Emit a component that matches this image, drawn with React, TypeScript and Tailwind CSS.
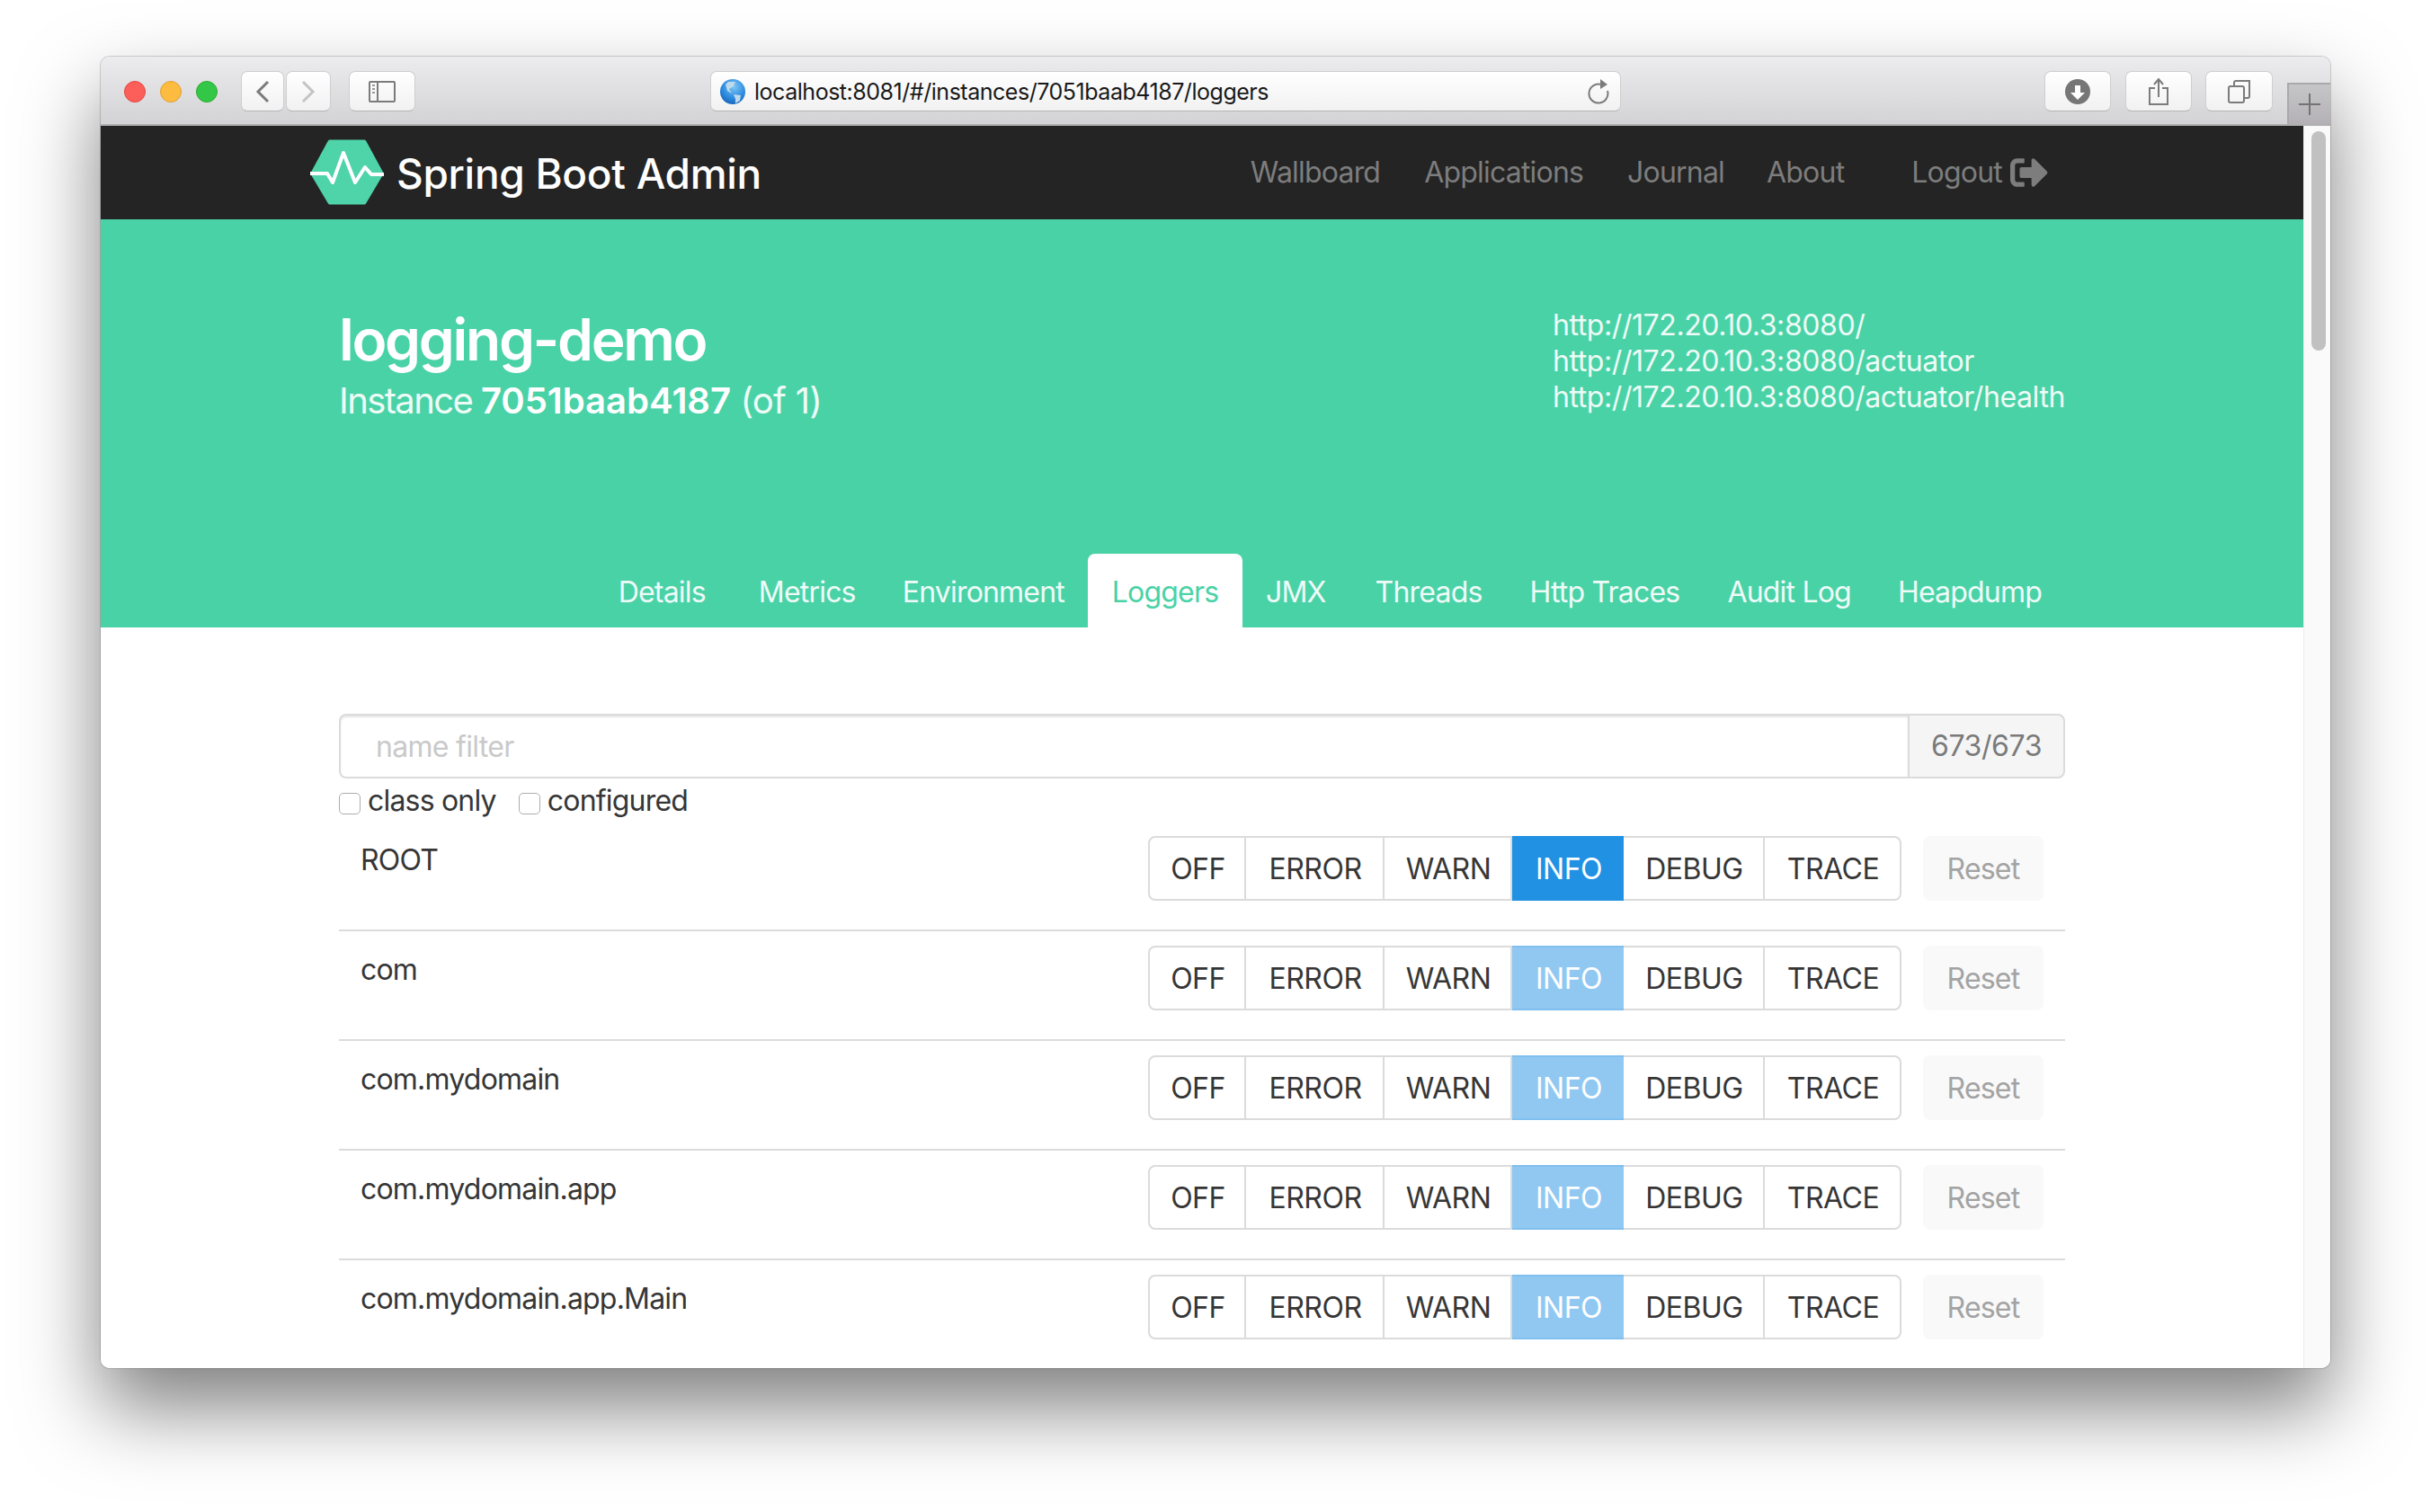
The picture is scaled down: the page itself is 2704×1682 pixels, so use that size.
import React from "react";
import { FaSignOutAlt } from "react-icons/fa";

const btnClass =
  "h-[45px] rounded-[7px] border border-[#cfcecf] border-b-[#b5b4b5] bg-gradient-to-b from-[#ffffff] to-[#f1f1f1] flex items-center justify-center shrink-0";

function Logo() {
  return (
    <svg width="82" height="74" viewBox="0 0 82 74" className="shrink-0">
      <path
        d="M22 3 H60 L79 38 L60 70 H22 L3 38 Z"
        fill="#4fd3a9"
        stroke="#4fd3a9"
        strokeWidth="5"
        strokeLinejoin="round"
      />
      <path
        d="M0 38 H19 L25 48 L37 15 L50 48 L61 31 L68 39 H82"
        fill="none"
        stroke="#ffffff"
        strokeWidth="4"
        strokeLinejoin="round"
      />
    </svg>
  );
}

function Globe() {
  return (
    <svg width="28" height="28" viewBox="0 0 28 28" className="shrink-0">
      <defs>
        <radialGradient id="g" cx="0.55" cy="0.3" r="0.8">
          <stop offset="0" stopColor="#7fc6f5" />
          <stop offset="0.55" stopColor="#2f8ee0" />
          <stop offset="1" stopColor="#1259b0" />
        </radialGradient>
      </defs>
      <circle cx="14" cy="14" r="14" fill="url(#g)" />
      <path d="M9 3 L17 3 L15 8 L10 11 L13 16 L8 13 L6 6 Z" fill="#bcd9ee" />
      <path d="M15 17 L23 18 L22 24 L17 27 L17 22 Z" fill="#bcd9ee" />
    </svg>
  );
}

function Toolbar() {
  return (
    <div className="h-[77px] shrink-0 flex items-start pt-4 border-b-2 border-[#b1b0b1] bg-gradient-to-b from-[#ecebed] to-[#d3d2d5]">
      <div className="ml-[26px] mt-[11px] flex gap-4">
        <div className="w-6 h-6 rounded-full bg-[#fc5f5a] border border-[#e2463f]" />
        <div className="w-6 h-6 rounded-full bg-[#fdbc40] border border-[#de9f34]" />
        <div className="w-6 h-6 rounded-full bg-[#33c748] border border-[#2aac2d]" />
      </div>
      <div className={btnClass + " ml-[26px] w-[48px]"}>
        <svg width="18" height="26" viewBox="0 0 18 26">
          <path d="M15 2 L4 13 L15 24" fill="none" stroke="#7b7b7b" strokeWidth="3" />
        </svg>
      </div>
      <div className={btnClass + " ml-[2px] w-[50px]"}>
        <svg width="18" height="26" viewBox="0 0 18 26">
          <path d="M3 2 L14 13 L3 24" fill="none" stroke="#c4c4c4" strokeWidth="3" />
        </svg>
      </div>
      <div className={btnClass + " ml-5 w-[74px]"}>
        <svg width="30" height="24" viewBox="0 0 30 24">
          <rect x="1" y="1" width="28" height="22" rx="1" fill="none" stroke="#7b7b7b" strokeWidth="2" />
          <path d="M10 1 V23" stroke="#7b7b7b" strokeWidth="2" />
          <path d="M4 5 H7 M4 9 H7 M4 13 H7" stroke="#9a9a9a" strokeWidth="2" />
        </svg>
      </div>
      <div className={btnClass + " ml-[328px] w-[1013px] justify-start px-[10px]"}>
        <Globe />
        <span className="ml-[10px] pt-[2px] text-[25px] leading-none text-[#1a1a1a] font-['Inter',sans-serif] tracking-[-0.47px] whitespace-nowrap">
          localhost:8081/#/instances/7051baab4187/loggers
        </span>
        <svg width="26" height="28" viewBox="0 0 26 28" className="ml-auto">
          <path d="M15 6 A 10.5 10.5 0 1 0 22 13" fill="none" stroke="#7b7b7b" strokeWidth="2" />
          <path d="M14 0 L22 6 L14 11 Z" fill="#7b7b7b" />
        </svg>
      </div>
      <div className={btnClass + " ml-[471px] w-[74px]"}>
        <svg width="28" height="28" viewBox="0 0 28 28">
          <circle cx="14" cy="14" r="14" fill="#767676" />
          <path d="M11 7 H17 V15 H22 L14 23 L6 15 H11 Z" fill="#ffffff" />
        </svg>
      </div>
      <div className={btnClass + " ml-4 w-[74px]"}>
        <svg width="22" height="30" viewBox="0 0 22 30">
          <path d="M7 11 H1 V29 H21 V11 H15" fill="none" stroke="#7b7b7b" strokeWidth="2" />
          <path d="M11 21 V2 M6 7 L11 1 L16 7" fill="none" stroke="#7b7b7b" strokeWidth="2" />
        </svg>
      </div>
      <div className={btnClass + " ml-[15px] w-[75px]"}>
        <svg width="26" height="26" viewBox="0 0 26 26">
          <rect x="1" y="7" width="17" height="18" rx="2" fill="none" stroke="#7b7b7b" strokeWidth="2" />
          <path d="M7 7 V3 Q7 1 9 1 H24 V18 Q24 20 22 20 H18" fill="none" stroke="#7b7b7b" strokeWidth="2" />
        </svg>
      </div>
      <div className="ml-4 mt-[13px] w-[48px] h-[46px] flex items-center justify-center border-t-2 border-l-2 border-[#a9a8aa] bg-gradient-to-b from-[#c6c5c8] to-[#b3b1b5]">
        <svg width="24" height="24" viewBox="0 0 24 24">
          <path d="M12 0 V24 M0 12 H24" stroke="#737373" strokeWidth="2" />
        </svg>
      </div>
    </div>
  );
}

function Navbar() {
  return (
    <div className="h-[104px] shrink-0 bg-[#242424] flex items-center pl-[233px] pr-[284px]">
      <Logo />
      <span className="ml-[14px] pt-[2px] text-[46px] font-medium text-white tracking-[-0.3px] whitespace-nowrap">Spring Boot Admin</span>
      <div className="ml-auto flex items-center text-[32px] text-[#7d7d7d] tracking-[-0.8px] whitespace-nowrap">
        <span>Wallboard</span>
        <span className="ml-[49px]">Applications</span>
        <span className="ml-[49px]">Journal</span>
        <span className="ml-[47px]">About</span>
        <span className="ml-[75px]">Logout</span>
        <FaSignOutAlt className="ml-[9px] text-[42px]" />
      </div>
    </div>
  );
}

const tabs = [
  { t: "Details", c: "pl-[26px] pr-[33px]" },
  { t: "Metrics", c: "px-[26px]" },
  { t: "Environment", c: "px-[26px]" },
  { t: "Loggers", c: "" },
  { t: "JMX", c: "pl-[26px] pr-[29px]" },
  { t: "Threads", c: "pl-[26px] pr-[27px]" },
  { t: "Http Traces", c: "pl-[26px] pr-[27px]" },
  { t: "Audit Log", c: "px-[26px]" },
  { t: "Heapdump", c: "px-[26px]" },
];

function Hero() {
  return (
    <div className="h-[454px] shrink-0 bg-[#4ad2a7] flex flex-col">
      <div className="w-[1920px] mx-auto flex justify-between items-start text-white">
        <div className="pt-[98px]">
          <div className="text-[64px] leading-[72px] font-semibold tracking-[-2.3px] whitespace-nowrap">logging-demo</div>
          <div className="mt-2 text-[40px] leading-[48px] text-[#eefbf6] tracking-[-0.75px] whitespace-nowrap">
            <span className="tracking-[-1.6px]">Instance </span>
            <span className="font-semibold text-white tracking-[0px]">7051baab4187</span> (of 1)
          </div>
        </div>
        <div className="w-[570px] pt-[98px] text-[32px] leading-[40px] text-[#eefbf6] tracking-[-0.42px] whitespace-nowrap">
          <div>http://172.20.10.3:8080/</div>
          <div>http://172.20.10.3:8080/actuator</div>
          <div>http://172.20.10.3:8080/actuator/health</div>
        </div>
      </div>
      <div className="mt-auto w-[1920px] mx-auto flex justify-end text-[32px] text-[#effbf7] tracking-[-0.8px]">
        {tabs.map(({ t, c }) =>
          t === "Loggers" ? (
            <div key={t} className="h-[82px] w-[172px] flex items-center justify-center pt-1 bg-white rounded-t-[8px] text-[#4ad2a7]">
              {t}
            </div>
          ) : (
            <div key={t} className={"h-[82px] flex items-center pt-1 " + c}>
              {t}
            </div>
          )
        )}
      </div>
    </div>
  );
}

const levels = [
  { n: "OFF", w: "w-[109px]" },
  { n: "ERROR", w: "w-[154px]" },
  { n: "WARN", w: "w-[142px]" },
  { n: "INFO", w: "w-[124px]" },
  { n: "DEBUG", w: "w-[157px]" },
  { n: "TRACE", w: "w-[152px]" },
];

function Row({ name, first }: { name: string; first?: boolean }) {
  return (
    <div className={first ? "flex justify-between pl-6 pr-6 pt-3 pb-8" : "flex justify-between pl-6 pr-6 pt-4 pb-8 border-t-2 border-[#dbdbdb]"}>
      <div className="pt-[7px] text-[#363636] leading-[40px] whitespace-nowrap">{name}</div>
      <div className="flex">
        <div className="flex h-[72px] rounded-[8px]">
          {levels.map((l, i) => {
            const isInfo = l.n === "INFO";
            const color = isInfo
              ? first
                ? "bg-[#2091e3] text-white border-[#2091e3]"
                : "bg-[#90c8f1] text-white border-[#80bfee]"
              : "bg-white text-[#363636] border-[#dbdbdb]";
            const edge = i === 0 ? "border-2 rounded-l-[8px]" : i === 5 ? "border-2 border-l-0 rounded-r-[8px]" : isInfo ? "border-2 border-l-0 border-r-0" : "border-2 border-l-0";
            return (
              <div key={l.n} className={"flex items-center justify-center pt-[2px] pl-[2px] tracking-[-0.5px] " + l.w + " " + color + " " + edge}>
                {l.n}
              </div>
            );
          })}
        </div>
        <div className="ml-6 w-[134px] h-[72px] pt-[2px] rounded-[8px] bg-[#f9f9f9] text-[#a3a3a3] flex items-center justify-center">Reset</div>
      </div>
    </div>
  );
}

function Content() {
  return (
    <div className="w-[1920px] mx-auto pt-24 text-[32px] tracking-[-0.8px]">
      <div className="flex h-[72px]">
        <input
          readOnly
          placeholder="name filter"
          className="flex-1 min-w-0 h-full rounded-l-[8px] border-2 border-r-0 border-[#dbdbdb] pl-[39px] text-[32px] tracking-[-0.7px] shadow-[inset_0_2px_2px_rgba(10,10,10,0.1)] placeholder:text-[#c9c9c9] outline-none"
        />
        <div className="w-[175px] rounded-r-[8px] border-2 border-[#dbdbdb] bg-[#f5f5f5] text-[#7a7a7a] tracking-[-0.4px] flex items-center justify-center">673/673</div>
      </div>
      <div className="h-[52px] flex items-start text-[#363636]">
        <label className="flex items-center h-[50px]">
          <input type="checkbox" readOnly className="appearance-none w-6 h-6 mt-[5px] rounded-[5px] border-[1.5px] border-[#adadad] bg-white" />
          <span className="ml-2">class only</span>
        </label>
        <label className="flex items-center h-[50px] ml-[25px]">
          <input type="checkbox" readOnly className="appearance-none w-6 h-6 mt-[5px] rounded-[5px] border-[1.5px] border-[#adadad] bg-white" />
          <span className="ml-2">configured</span>
        </label>
      </div>
      <Row name="ROOT" first />
      <Row name="com" />
      <Row name="com.mydomain" />
      <Row name="com.mydomain.app" />
      <Row name="com.mydomain.app.Main" />
    </div>
  );
}

export default function App() {
  return (
    <div className="h-[1682px] overflow-hidden bg-white pt-[63px] pl-[112px] font-['Inter',sans-serif]">
      <div className="w-[2480px] h-[1459px] rounded-[10px] overflow-hidden flex flex-col bg-white shadow-[0_44px_88px_rgba(0,0,0,0.5),0_0_0_1px_rgba(0,0,0,0.16)]">
        <Toolbar />
        <div className="flex-1 min-h-0 flex">
          <div className="flex-1 min-w-0 flex flex-col bg-white">
            <Navbar />
            <Hero />
            <Content />
          </div>
          <div className="w-[30px] shrink-0 bg-[#fafafa] border-l border-[#ececec] pl-2 pt-[6px]">
            <div className="w-4 h-[244px] rounded-full bg-[#c1c1c1]" />
          </div>
        </div>
      </div>
    </div>
  );
}
